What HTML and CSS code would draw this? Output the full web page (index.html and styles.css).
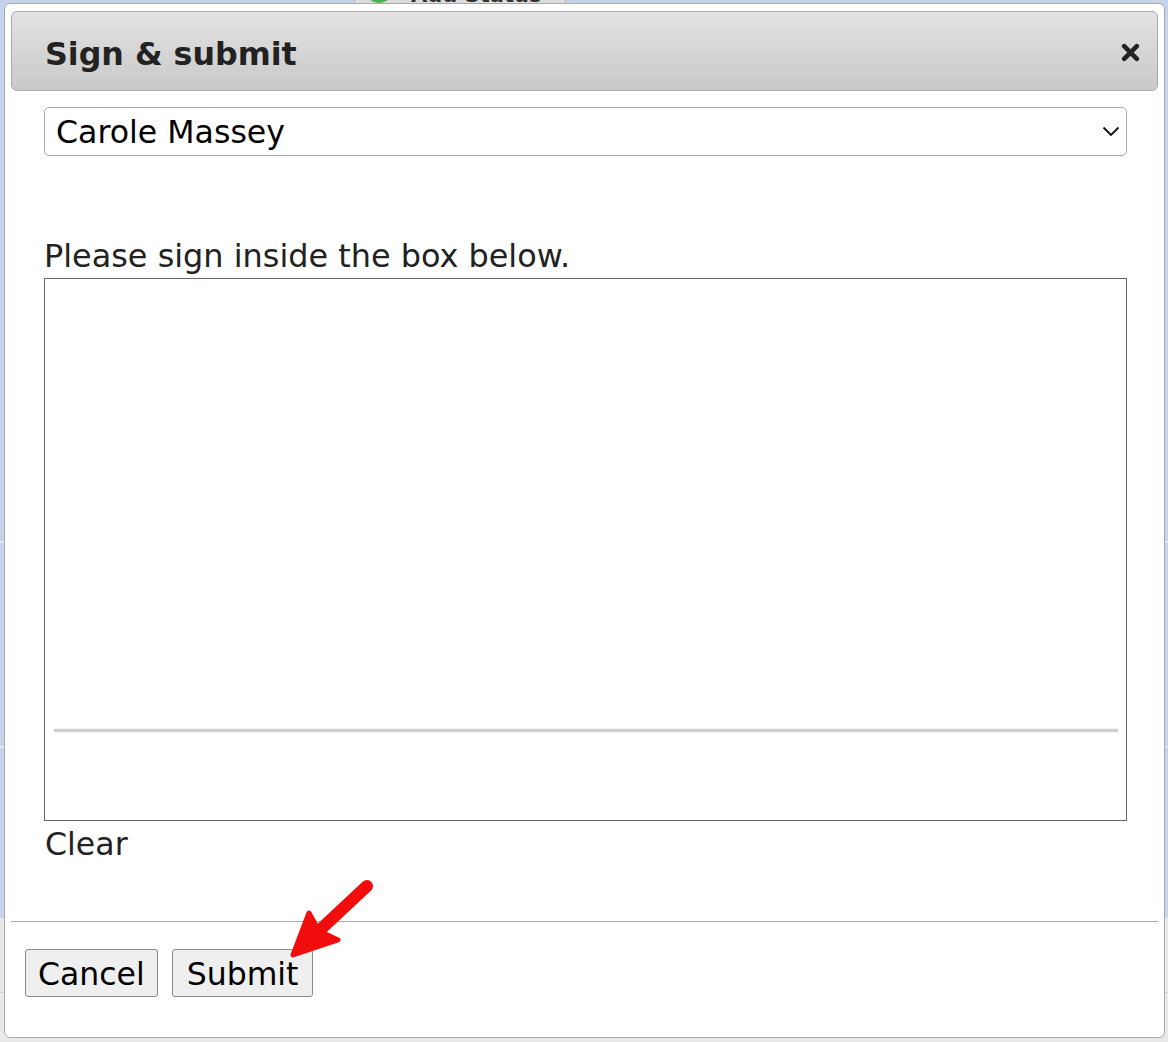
FILE: index.html
```html
<!DOCTYPE html>
<html lang="en">
<head>
<meta charset="utf-8">
<title>Sign &amp; submit</title>
<link rel="stylesheet" href="styles.css">
</head>
<body>
<div class="page">
  <div class="toolbar">
    <button class="bg-btn"><span class="bg-plus"></span>Add Status</button>
  </div>
  <div class="bg-panel">
    <div class="bg-row r1"></div>
    <div class="bg-row r2"></div>
  </div>
  <div class="bg-bottom">
    <div class="bg-row r3"></div>
  </div>
</div>

<div class="dialog">
  <div class="titlebar">
    <span class="title">Sign &amp; submit</span>
    <button class="close" aria-label="close">
      <svg width="19" height="19" viewBox="0 0 19 19"><path d="M3.2 3.2 L15.8 15.8 M15.8 3.2 L3.2 15.8" stroke="#222" stroke-width="4.6" stroke-linecap="round" fill="none"/></svg>
    </button>
  </div>
  <div class="content">
    <div class="select-wrap">
      <select class="select"><option>Carole Massey</option></select>
      <svg class="chev" width="18" height="11" viewBox="0 0 18 11"><path d="M1.5 1.5 L9 9 L16.5 1.5" stroke="#111" stroke-width="1.8" fill="none"/></svg>
    </div>
    <p class="prompt">Please sign inside the box below.</p>
    <div class="sigbox"><div class="sigline"></div></div>
    <div class="clear">Clear</div>
  </div>
  <div class="footer">
    <button class="btn">Cancel</button>
    <button class="btn btn-wide">Submit</button>
  </div>
</div>

<svg class="arrow" width="1168" height="1042" viewBox="0 0 1168 1042">
  <line x1="367" y1="886" x2="306" y2="943" stroke="#f20d0d" stroke-width="12" stroke-linecap="round"/>
  <polygon points="293,955 309,913 319,931 338,940" fill="#f20d0d" stroke="#f20d0d" stroke-width="5" stroke-linejoin="round"/>
</svg>
</body>
</html>
```

FILE: styles.css
```css
* { box-sizing: border-box; }

html, body {
  margin: 0;
  padding: 0;
}

body {
  width: 1168px;
  height: 1042px;
  overflow: hidden;
  position: relative;
  font-family: "DejaVu Sans", Verdana, sans-serif;
  background: #e9e9e9;
}

.page {
  height: 1042px;
  display: flex;
  flex-direction: column;
}

.toolbar {
  height: 0;
  padding-left: 354px;
  position: relative;
  z-index: 1;
}

.bg-btn {
  margin-top: -28px;
  height: 34px;
  width: 212px;
  display: flex;
  align-items: flex-end;
  gap: 18px;
  padding: 0 10px 0 10px;
  background: #dcdcdc;
  border: 1px solid #b5b5b5;
  border-radius: 3px;
  font-family: "DejaVu Sans", sans-serif;
  font-weight: bold;
  font-size: 21px;
  line-height: 20px;
  white-space: nowrap;
  color: #333;
}

.bg-plus {
  flex: none;
  width: 28px;
  height: 28px;
  margin-bottom: 2px;
  border-radius: 50%;
  background: #4caf50;
}

.bg-panel {
  height: 918px;
  background: #c5d4ea;
  position: relative;
}

.bg-bottom {
  flex: 1;
  background: #e9e9e9;
  position: relative;
}

.bg-row {
  height: 2px;
  background: #e4e8ee;
}

.r1 { margin-top: 541px; }
.r2 { margin-top: 203px; }
.r3 { margin-top: 74px; background: #d0d0d0; height: 1px; }

.dialog {
  position: absolute;
  z-index: 2;
  left: 4px;
  top: 3px;
  width: 1161px;
  height: 1035px;
  background: #fff;
  border: 1px solid #aaa;
  border-radius: 6px;
  padding: 7px 6px 0 6px;
  display: flex;
  flex-direction: column;
}

.titlebar {
  height: 80px;
  border: 1px solid #aaa;
  border-radius: 6px;
  background: linear-gradient(#e3e3e3, #d6d6d6 50%, #c9c9c9);
  display: flex;
  align-items: center;
  justify-content: space-between;
  padding: 5px 14px 0 33px;
}

.title {
  font-weight: bold;
  font-size: 31.7px;
  color: #222;
  line-height: 36px;
}

.close {
  width: 26px;
  height: 26px;
  padding: 0;
  margin-top: -3px;
  border: 0;
  background: transparent;
  display: flex;
  align-items: center;
  justify-content: center;
}

.content {
  padding: 16px 31px 0 33px;
  display: flex;
  flex-direction: column;
}

.select-wrap {
  position: relative;
  height: 49px;
}

.select {
  appearance: none;
  -webkit-appearance: none;
  width: 100%;
  height: 49px;
  border: 1px solid #aaa;
  border-radius: 5px;
  background: #fff;
  font-family: "DejaVu Sans", Verdana, sans-serif;
  font-size: 31.6px;
  color: #000;
  padding: 0 40px 0 11px;
  margin: 0;
}

.chev {
  position: absolute;
  right: 7px;
  top: 19px;
}

.prompt {
  margin: 82px 0 0 0;
  font-size: 31.9px;
  line-height: 36px;
  color: #222;
}

.sigbox {
  margin-top: 4px;
  height: 543px;
  border: 1px solid #666;
  display: flex;
  flex-direction: column;
  justify-content: flex-end;
  padding: 0 8px 88px 9px;
}

.sigline {
  height: 3px;
  background: #cfcfcf;
  box-shadow: 0 0 2px #d6d6d6;
}

.clear {
  margin: 5px 0 0 1px;
  font-size: 31.6px;
  line-height: 36px;
  color: #222;
}

.footer {
  margin-top: 59px;
  border-top: 1px solid #aaa;
  padding: 27px 0 0 14px;
  display: flex;
  gap: 14px;
}

.btn {
  height: 48px;
  padding: 2px 12px 0 12px;
  background: #efefef;
  border: 1px solid #8a8a8a;
  border-radius: 3px;
  font-family: "DejaVu Sans", Verdana, sans-serif;
  font-size: 31.5px;
  color: #000;
  line-height: 36px;
}

.btn-wide {
  padding: 2px 14px 0 14px;
}

.arrow {
  position: absolute;
  z-index: 3;
  left: 0;
  top: 0;
  pointer-events: none;
}
```
